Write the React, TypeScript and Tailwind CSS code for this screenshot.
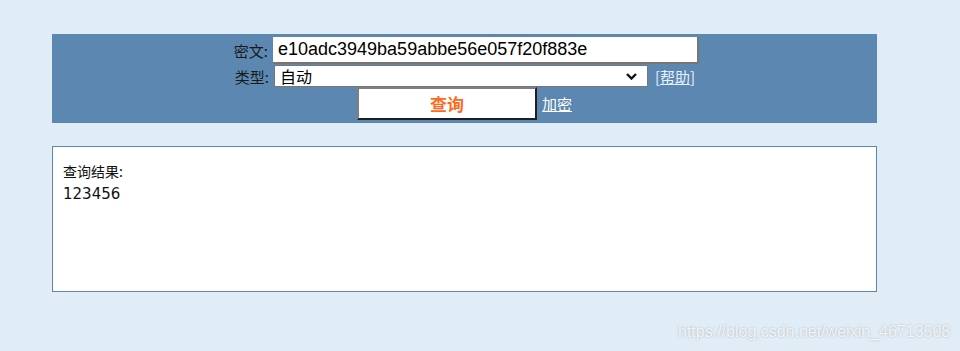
export default function App() {
  const cjk = { fontFamily: '"Noto Sans CJK SC", "Liberation Sans", sans-serif' };
  return (
    <div className="relative min-h-screen h-[351px] bg-[#e1edf6] pt-[34px]" style={cjk}>
      <div className="ml-[52px] w-[825px]">
        <div className="flex h-[89px] flex-col items-center bg-[#5b87b0] pt-[3px]">
          <div className="flex h-[27px] items-center">
            <span className="w-[43px] pr-[5px] text-right text-[15px] leading-none text-[#1a1a1a]">密文:</span>
            <input
              defaultValue="e10adc3949ba59abbe56e057f20f883e"
              className="h-[27px] w-[426px] border-b-2 border-r-2 border-[#767676] bg-white pl-[5px] text-[18px] text-black outline-none"
              style={{ fontFamily: '"Liberation Sans", Arial, sans-serif' }}
            />
          </div>
          <div className="mt-[1px] flex h-[22px] items-center pr-[2px]">
            <span className="w-[42px] pr-[5px] text-right text-[15px] leading-none text-[#1a1a1a]">类型:</span>
            <div className="relative flex h-[22px] w-[374px] items-center border border-[#767676] bg-white pl-[5px]">
              <span className="text-[16px] leading-none text-black">自动</span>
              <svg
                className="pointer-events-none absolute right-[10px] top-[7px] h-[7px] w-[11px]"
                viewBox="0 0 11 7"
                fill="none"
                stroke="#111"
                strokeWidth={2.4}
              >
                <path d="M1 1l4.5 4.5L10 1" />
              </svg>
            </div>
            <a href="#" className="ml-[7px] text-[15px] leading-none text-[#e6f0ff]">
              [<span className="underline">帮助</span>]
            </a>
          </div>
          <div className="flex h-[33px] items-center">
            <button className="h-[33px] w-[180px] border-2 border-b-[#1f1f1f] border-l-[#7f7f7f] border-r-[#1f1f1f] border-t-[#7f7f7f] bg-white text-[17px] font-bold leading-none text-[#ff6a1f]">
              查询
            </button>
            <a href="#" className="ml-[5px] text-[15px] leading-none text-white underline">
              加密
            </a>
          </div>
        </div>
        <div className="mt-[23px] h-[146px] border border-[#5b87b0] bg-white px-[10px] pt-[12px]">
          <div className="text-[14px] leading-[24px] text-[#111]">查询结果:</div>
          <div
            className="text-[15px] leading-[22px] text-[#111]"
            style={{ fontFamily: '"DejaVu Sans", Verdana, sans-serif' }}
          >
            123456
          </div>
        </div>
      </div>
      <div
        className="absolute left-[678px] top-[320px] text-[16px] text-white/80 [text-shadow:0_0_2px_rgba(120,130,140,0.6)]"
        style={{ fontFamily: '"Liberation Sans", Arial, sans-serif' }}
      >
        https://blog.csdn.net/weixin_46713508
      </div>
    </div>
  );
}
